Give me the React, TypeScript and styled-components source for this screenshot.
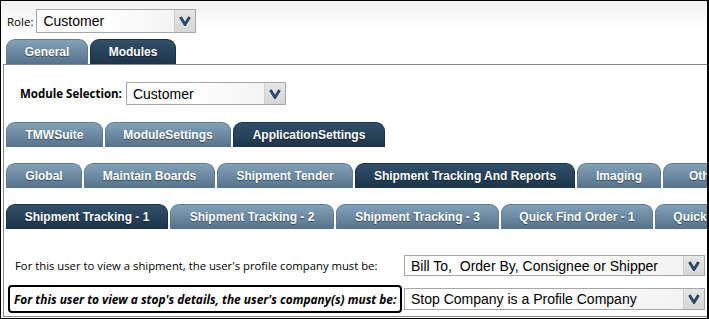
import React from "react";
import styled, { createGlobalStyle } from "styled-components";

const GlobalStyle = createGlobalStyle`
  html, body {
    margin: 0;
    padding: 0;
    overflow: hidden;
    background: #fff;
  }
`;

const Chevron = () => (
  <svg width="12" height="10" viewBox="0 0 12 10">
    <polyline
      points="1.4,1 6,8.4 10.6,1"
      fill="none"
      stroke="#2b4764"
      strokeWidth="2.9"
      strokeLinejoin="miter"
    />
  </svg>
);

const Select = ({ value, width, height }: { value: string; width: number; height: number }) => (
  <SelectBox $width={width} $height={height}>
    <SelectValue>{value}</SelectValue>
    <SelectButton>
      <Chevron />
    </SelectButton>
  </SelectBox>
);

type TabDef = { label: string; width: number; active?: boolean };

const TabStrip = ({ tabs }: { tabs: TabDef[] }) => (
  <TabRow>
    {tabs.map((t) => (
      <Tab key={t.label} $width={t.width} $active={!!t.active}>
        {t.label}
      </Tab>
    ))}
  </TabRow>
);

const topTabs: TabDef[] = [
  { label: "General", width: 82 },
  { label: "Modules", width: 86, active: true },
];

const moduleTabs: TabDef[] = [
  { label: "TMWSuite", width: 97 },
  { label: "ModuleSettings", width: 126 },
  { label: "ApplicationSettings", width: 152, active: true },
];

const appTabs: TabDef[] = [
  { label: "Global", width: 76 },
  { label: "Maintain Boards", width: 131 },
  { label: "Shipment Tender", width: 136 },
  { label: "Shipment Tracking And Reports", width: 220, active: true },
  { label: "Imaging", width: 84 },
  { label: "Other", width: 84 },
];

const trackingTabs: TabDef[] = [
  { label: "Shipment Tracking - 1", width: 162, active: true },
  { label: "Shipment Tracking - 2", width: 164 },
  { label: "Shipment Tracking - 3", width: 163 },
  { label: "Quick Find Order - 1", width: 152 },
  { label: "Quick Find Order - 2", width: 152 },
];

export default function App() {
  return (
    <>
      <GlobalStyle />
      <Frame>
        <RoleRow>
          <Label>Role:</Label>
          <Select value="Customer" width={160} height={24} />
        </RoleRow>
        <TopTabs>
          <TabStrip tabs={topTabs} />
        </TopTabs>
        <Panel>
          <ModuleRow>
            <BoldLabel>Module Selection:</BoldLabel>
            <Select value="Customer" width={160} height={23} />
          </ModuleRow>
          <TabStrip tabs={moduleTabs} />
          <TabStrip tabs={appTabs} />
          <TabStrip tabs={trackingTabs} />
          <Form>
            <FieldLabel>For this user to view a shipment, the user's profile company must be:</FieldLabel>
            <Select value="Bill To,  Order By, Consignee or Shipper" width={301} height={21} />
            <FieldLabel $highlight>
              For this user to view a stop's details, the user's company(s) must be:
            </FieldLabel>
            <Select value="Stop Company is a Profile Company" width={301} height={22} />
          </Form>
        </Panel>
      </Frame>
    </>
  );
}

const Frame = styled.div`
  width: 709px;
  height: 319px;
  box-sizing: border-box;
  border: 1px solid #000;
  border-right-width: 2px;
  background: linear-gradient(#f2f2f2 0px, #ffffff 28px);
  display: flex;
  flex-direction: column;
  overflow: hidden;
`;

const RoleRow = styled.div`
  display: flex;
  align-items: center;
  gap: 3px;
  padding: 8px 0 0 6px;
`;

const Label = styled.span`
  font-family: "Open Sans", "Noto Sans", sans-serif;
  font-size: 11.5px;
  color: #000;
`;

const BoldLabel = styled(Label)`
  font-weight: bold;
  font-size: 11.5px;
`;

const SelectBox = styled.div<{ $width: number; $height: number }>`
  width: ${(p) => p.$width}px;
  height: ${(p) => p.$height}px;
  box-sizing: border-box;
  border: 1px solid #a7a7a7;
  background: linear-gradient(90deg, #ffffff 40%, #f1f1f1 100%);
  display: flex;
  align-items: stretch;
  flex-shrink: 0;
`;

const SelectValue = styled.div`
  flex: 1;
  display: flex;
  align-items: center;
  padding-left: 6px;
  font-family: "Liberation Sans", Arial, sans-serif;
  font-size: 14px;
  color: #000;
  white-space: pre;
  overflow: hidden;
`;

const SelectButton = styled.div`
  width: 20px;
  display: flex;
  align-items: center;
  justify-content: center;
  border-left: 1px solid #d0d0d0;
  background: linear-gradient(#e6e6e6, #d6d6d6);
`;

const TopTabs = styled.div`
  padding: 6px 0 0 5px;
`;

const TabRow = styled.div`
  display: flex;
  gap: 2px;
`;

const Tab = styled.div<{ $width: number; $active: boolean }>`
  width: ${(p) => p.$width}px;
  height: 25px;
  flex-shrink: 0;
  box-sizing: border-box;
  display: flex;
  align-items: center;
  justify-content: center;
  border-radius: 9px 9px 0 0;
  border: 1px solid ${(p) => (p.$active ? "#1b3044" : "#5f7b92")};
  border-bottom: none;
  background: ${(p) =>
    p.$active
      ? "linear-gradient(#31506a, #1d3449)"
      : "linear-gradient(#82a2ba, #55728a)"};
  color: #fff;
  font-family: "Liberation Sans", Arial, sans-serif;
  font-size: 12px;
  font-weight: bold;
  text-shadow: 0 1px 1px rgba(0, 0, 0, 0.45);
  white-space: nowrap;
  overflow: hidden;
`;

const Panel = styled.div`
  flex: 1;
  margin: 0 0 1px 2px;
  border: 1px solid #8a8a8a;
  border-right: none;
  background: #fff;
  padding: 0 0 0 2px;
  display: flex;
  flex-direction: column;
  gap: 16px;
  overflow: hidden;
`;

const ModuleRow = styled.div`
  display: flex;
  align-items: center;
  gap: 4px;
  padding: 17px 0 0 14px;
  margin-bottom: 1px;
`;

const Form = styled.div`
  display: grid;
  grid-template-columns: 394px 301px;
  column-gap: 2px;
  row-gap: 9px;
  align-items: center;
  padding: 10px 0 0 2px;
`;

const FieldLabel = styled.div<{ $highlight?: boolean }>`
  height: ${(p) => (p.$highlight ? "28px" : "auto")};
  box-sizing: border-box;
  display: flex;
  align-items: center;
  padding-left: ${(p) => (p.$highlight ? "4px" : "7px")};
  border: ${(p) => (p.$highlight ? "2px solid #000" : "none")};
  border-radius: 4px;
  font-family: "Open Sans", "Noto Sans", sans-serif;
  font-size: ${(p) => (p.$highlight ? "11.9px" : "11.3px")};
  font-weight: ${(p) => (p.$highlight ? "bold" : "normal")};
  font-style: ${(p) => (p.$highlight ? "italic" : "normal")};
  color: #000;
  white-space: nowrap;
`;
